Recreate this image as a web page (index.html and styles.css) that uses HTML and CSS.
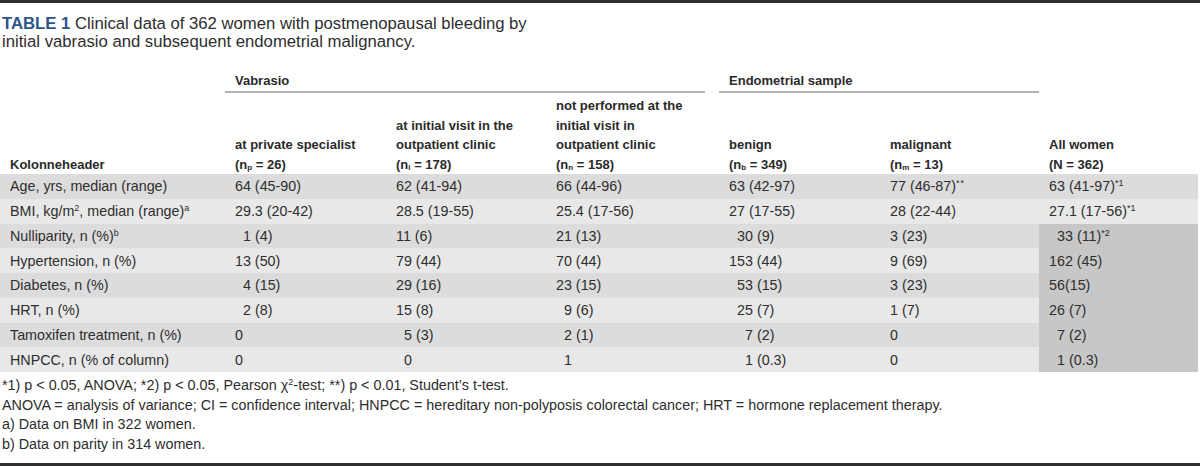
FILE: index.html
```html
<!DOCTYPE html>
<html lang="en">
<head>
<meta charset="utf-8">
<title>Table 1</title>
<link rel="stylesheet" href="styles.css">
</head>
<body>
<div class="page">
  <p class="caption"><b class="label">TABLE 1</b> Clinical data of 362 women with postmenopausal bleeding by<br>initial vabrasio and subsequent endometrial malignancy.</p>
  <table class="data">
    <colgroup>
      <col class="c-label">
      <col class="c-std">
      <col class="c-std2">
      <col class="c-wide">
      <col class="c-std">
      <col class="c-std3">
      <col class="c-std3">
    </colgroup>
    <thead>
      <tr class="group">
        <th></th>
        <th colspan="3"><div class="rule rule-short">Vabrasio</div></th>
        <th colspan="2"><div class="rule">Endometrial sample</div></th>
        <th></th>
      </tr>
      <tr class="cols">
        <th>Kolonneheader</th>
        <th>at private specialist<br>(n<sub>p</sub> = 26)</th>
        <th>at initial visit in the<br>outpatient clinic<br>(n<sub>i</sub> = 178)</th>
        <th>not performed at the<br>initial visit in<br>outpatient clinic<br>(n<sub>n</sub> = 158)</th>
        <th>benign<br>(n<sub>b</sub> = 349)</th>
        <th>malignant<br>(n<sub>m</sub> = 13)</th>
        <th>All women<br>(N = 362)</th>
      </tr>
    </thead>
    <tbody>
      <tr class="dark">
        <td>Age, yrs, median (range)</td>
        <td>64 (45-90)</td>
        <td>62 (41-94)</td>
        <td>66 (44-96)</td>
        <td>63 (42-97)</td>
        <td>77 (46-87)<sup class="ast">**</sup></td>
        <td>63 (41-97)<sup>*1</sup></td>
      </tr>
      <tr class="light">
        <td>BMI, kg/m<sup class="sq">2</sup>, median (range)<sup>a</sup></td>
        <td>29.3 (20-42)</td>
        <td>28.5 (19-55)</td>
        <td>25.4 (17-56)</td>
        <td>27 (17-55)</td>
        <td>28 (22-44)</td>
        <td>27.1 (17-56)<sup>*1</sup></td>
      </tr>
      <tr class="dark">
        <td>Nulliparity, n (%)<sup>b</sup></td>
        <td><span class="i1">1 (4)</span></td>
        <td>11 (6)</td>
        <td>21 (13)</td>
        <td><span class="i1">30 (9)</span></td>
        <td>3 (23)</td>
        <td class="hl"><span class="i1">33 (11)<sup>*2</sup></span></td>
      </tr>
      <tr class="light">
        <td>Hypertension, n (%)</td>
        <td>13 (50)</td>
        <td>79 (44)</td>
        <td>70 (44)</td>
        <td>153 (44)</td>
        <td>9 (69)</td>
        <td class="hl">162 (45)</td>
      </tr>
      <tr class="dark">
        <td>Diabetes, n (%)</td>
        <td><span class="i1">4 (15)</span></td>
        <td>29 (16)</td>
        <td>23 (15)</td>
        <td><span class="i1">53 (15)</span></td>
        <td>3 (23)</td>
        <td class="hl">56(15)</td>
      </tr>
      <tr class="light">
        <td>HRT, n (%)</td>
        <td><span class="i1">2 (8)</span></td>
        <td>15 (8)</td>
        <td><span class="i1">9 (6)</span></td>
        <td><span class="i1">25 (7)</span></td>
        <td>1 (7)</td>
        <td class="hl">26 (7)</td>
      </tr>
      <tr class="dark">
        <td>Tamoxifen treatment, n (%)</td>
        <td>0</td>
        <td><span class="i1">5 (3)</span></td>
        <td><span class="i1">2 (1)</span></td>
        <td><span class="i2">7 (2)</span></td>
        <td>0</td>
        <td class="hl"><span class="i1">7 (2)</span></td>
      </tr>
      <tr class="light">
        <td>HNPCC, n (% of column)</td>
        <td>0</td>
        <td><span class="i1">0</span></td>
        <td><span class="i1">1</span></td>
        <td><span class="i2">1 (0.3)</span></td>
        <td>0</td>
        <td class="hl"><span class="i1">1 (0.3)</span></td>
      </tr>
    </tbody>
  </table>
  <div class="notes">
    <p>*1) p &lt; 0.05, ANOVA; *2) p &lt; 0.05, Pearson χ<sup class="sq">2</sup>-test; **) p &lt; 0.01, Student’s t-test.</p>
    <p>ANOVA = analysis of variance; CI = confidence interval; HNPCC = hereditary non-polyposis colorectal cancer; HRT = hormone replacement therapy.</p>
    <p>a) Data on BMI in 322 women.</p>
    <p>b) Data on parity in 314 women.</p>
  </div>
</div>
</body>
</html>
```
FILE: styles.css
```css
* { box-sizing: border-box; }

html, body {
  margin: 0;
  padding: 0;
  background: #ffffff;
}

body {
  font-family: "Liberation Sans", Arial, Helvetica, sans-serif;
  color: #2e2e2e;
}

.page {
  width: 1200px;
  height: 466px;
  border-top: 3px solid #2f2f2f;
  border-bottom: 3px solid #2f2f2f;
  display: flex;
  flex-direction: column;
}

.caption {
  margin: 12px 0 0 2px;
  font-size: 16.7px;
  line-height: 18px;
  color: #2e2e2e;
}

.caption .label {
  color: #2d5589;
  font-weight: bold;
}

.data {
  margin-top: 21px;
  width: 1198px;
  border-collapse: collapse;
  table-layout: fixed;
}

.c-label { width: 225px; }
.c-std { width: 161px; }
.c-std2 { width: 160px; }
.c-wide { width: 173px; }
.c-std3 { width: 159px; }

.data th {
  font-size: 13px;
  font-weight: bold;
  text-align: left;
  padding: 0;
  color: #2a2a2a;
}

.group th {
  vertical-align: bottom;
}

.rule {
  line-height: 18px;
  padding: 0 0 1px 10px;
  border-bottom: 2px solid #b3b3b3;
}

.rule-short {
  margin-right: 14px;
}

.cols th {
  vertical-align: bottom;
  line-height: 19.5px;
  padding: 0 0 0 10px;
  height: 81px;
}

.data sub {
  font-size: 8px;
  vertical-align: -1px;
  line-height: 0;
}

.data td {
  font-size: 14.3px;
  line-height: 16px;
  height: 24.75px;
  padding: 0 0 0 10px;
  vertical-align: middle;
  white-space: nowrap;
}

.dark td { background: #dcdcdc; }
.light td { background: #e8e8e8; }
.data td.hl { background: #c7c7c7; }

sup {
  font-size: 9px;
  line-height: 0;
  vertical-align: 5px;
}

sup.sq {
  font-size: 9px;
  vertical-align: 5px;
}

sup.ast {
  letter-spacing: 1px;
}

.i1 { padding-left: 8px; }
.i2 { padding-left: 16px; }

.notes {
  padding: 4px 0 0 2px;
  font-size: 14.35px;
  line-height: 19.7px;
}

.notes p {
  margin: 0;
}
```
